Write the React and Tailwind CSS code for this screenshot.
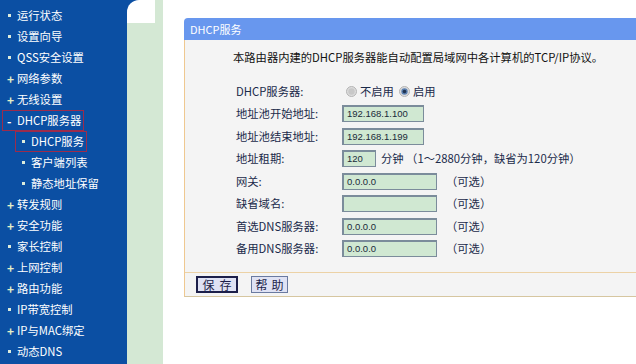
import React from 'react';

const menu = [
  { label: '运行状态', mark: 'dot' },
  { label: '设置向导', mark: 'dot' },
  { label: 'QSS安全设置', mark: 'dot' },
  { label: '网络参数', mark: 'plus' },
  { label: '无线设置', mark: 'plus' },
  { label: 'DHCP服务器', mark: 'minus', boxed: 'ml-[2px] pl-[4px]' },
  { label: 'DHCP服务', mark: 'dot', sub: true, boxed: 'ml-[15px] pl-[5px]' },
  { label: '客户端列表', mark: 'dot', sub: true },
  { label: '静态地址保留', mark: 'dot', sub: true },
  { label: '转发规则', mark: 'plus' },
  { label: '安全功能', mark: 'plus' },
  { label: '家长控制', mark: 'dot' },
  { label: '上网控制', mark: 'plus' },
  { label: '路由功能', mark: 'plus' },
  { label: 'IP带宽控制', mark: 'dot' },
  { label: 'IP与MAC绑定', mark: 'plus' },
  { label: '动态DNS', mark: 'dot' },
];

function Mark({ type }) {
  if (type === 'plus') {
    return <span className="w-[10px] shrink-0 text-[#e6f0c8] font-bold text-[12px] leading-none">+</span>;
  }
  if (type === 'minus') {
    return <span className="w-[10px] shrink-0 text-white font-bold text-[12px] leading-none">-</span>;
  }
  return (
    <span className="w-[10px] shrink-0 flex items-center pl-[1px]">
      <span className="w-[3px] h-[3px] bg-[#dcecdc]" />
    </span>
  );
}

function MenuItem({ item }) {
  const inner = (
    <>
      <Mark type={item.mark} />
      <span className="whitespace-nowrap">{item.label}</span>
    </>
  );
  if (item.boxed) {
    return (
      <div className="h-[21px] flex items-center">
        <div className={`h-[21px] flex items-center border border-[#9c2c4c] pr-[2px] ${item.boxed}`}>
          {inner}
        </div>
      </div>
    );
  }
  return (
    <div className={`h-[21px] flex items-center ${item.sub ? 'pl-[21px]' : 'pl-[7px]'}`}>
      {inner}
    </div>
  );
}

function Radio({ checked }) {
  return (
    <svg width="11" height="11" viewBox="0 0 11 11" className="mr-[3px]">
      <circle cx="5.5" cy="5.5" r="5" fill="#dcdcdc" stroke="#b4b4b4" />
      <circle cx="5.5" cy="5.5" r="3.2" fill={checked ? '#5a7fb0' : '#c8c8c8'} />
      {checked && <circle cx="5.5" cy="5.5" r="1.8" fill="#1f3350" />}
    </svg>
  );
}

function Field({ value, w }) {
  return (
    <div className={`${w} h-[17px] bg-[#d0e8d2] border border-[#7b8c9b] border-t-2 border-l-2 flex items-center pl-[3px] text-[9.5px] text-[#1a2a3a] font-['Liberation_Sans',sans-serif] whitespace-nowrap`}>
      {value}
    </div>
  );
}

function Row({ label, children }) {
  return (
    <div className="h-[22.5px] flex items-center whitespace-nowrap">
      <div className="w-[106px] pl-[51px] box-content shrink-0">{label}</div>
      <div className="flex items-center">{children}</div>
    </div>
  );
}

const optional = <span className="ml-[9px]">（可选）</span>;

export default function App() {
  return (
    <div className="w-[636px] h-[364px] flex bg-white overflow-hidden text-[11.3px] font-['Noto_Sans_CJK_SC','Liberation_Sans',sans-serif]">
      {/* Sidebar */}
      <aside className="w-[127px] shrink-0 bg-[#0b4fa3] pt-[5px] text-white">
        {menu.map((item) => (
          <MenuItem key={item.label} item={item} />
        ))}
      </aside>

      {/* Green gutter */}
      <div className="w-[36px] shrink-0 flex flex-col bg-[#0b4fa3]">
        <div className="flex h-[23px]">
          <div className="w-[28px] bg-white rounded-tl-[12px]" />
          <div className="flex-1 bg-[#d4e8d4]" />
        </div>
        <div className="flex-1 bg-[#d4e8d4]" />
      </div>

      {/* Content */}
      <main className="flex-1 pl-[21px] pt-[18px] overflow-hidden">
        <div className="w-[480px]">
          <div className="h-[22px] bg-[#6897ee] rounded-tl-[4px] flex items-center pl-[6px] text-white text-[11px]">
            DHCP服务
          </div>
          <div className="bg-[#f4f4f4] border-l border-[#efc890] border-b border-b-[#d6c6a0]">
            <div className="pt-[8px] pb-[12px] text-[#1a2a4a]">
              <div className="h-[18px] flex items-center pl-[48px] text-[#111] whitespace-nowrap">
                本路由器内建的DHCP服务器能自动配置局域网中各计算机的TCP/IP协议。
              </div>
              <div className="mt-[14px]">
                <Row label="DHCP服务器:">
                  <span className="ml-[4px] flex items-center">
                    <Radio />
                    <span>不启用</span>
                  </span>
                  <span className="ml-[5px] flex items-center">
                    <Radio checked />
                    <span>启用</span>
                  </span>
                </Row>
                <Row label="地址池开始地址:">
                  <Field value="192.168.1.100" w="w-[82px]" />
                </Row>
                <Row label="地址池结束地址:">
                  <Field value="192.168.1.199" w="w-[82px]" />
                </Row>
                <Row label="地址租期:">
                  <Field value="120" w="w-[34px]" />
                  <span className="ml-[5px]">分钟 （1～2880分钟，缺省为120分钟）</span>
                </Row>
                <Row label="网关:">
                  <Field value="0.0.0.0" w="w-[95px]" />
                  {optional}
                </Row>
                <Row label="缺省域名:">
                  <Field value="" w="w-[95px]" />
                  {optional}
                </Row>
                <Row label="首选DNS服务器:">
                  <Field value="0.0.0.0" w="w-[95px]" />
                  {optional}
                </Row>
                <Row label="备用DNS服务器:">
                  <Field value="0.0.0.0" w="w-[95px]" />
                  {optional}
                </Row>
              </div>
            </div>
            <div className="h-[24px] border-t border-[#ecd2a6] flex items-center pl-[11px] gap-[13px]">
              <button className="w-[42px] h-[17px] bg-[#dfe2f4] border-2 border-[#1c1f4a] text-[#1c1f4a] text-[12px] leading-none flex items-center justify-center whitespace-nowrap gap-[5px]">
                <span>保</span>
                <span>存</span>
              </button>
              <button className="w-[37px] h-[17px] bg-[#dfe2f4] border border-[#6a7aa0] text-[#1c1f4a] text-[12px] leading-none flex items-center justify-center whitespace-nowrap gap-[4px]">
                <span>帮</span>
                <span>助</span>
              </button>
            </div>
          </div>
        </div>
      </main>
    </div>
  );
}
